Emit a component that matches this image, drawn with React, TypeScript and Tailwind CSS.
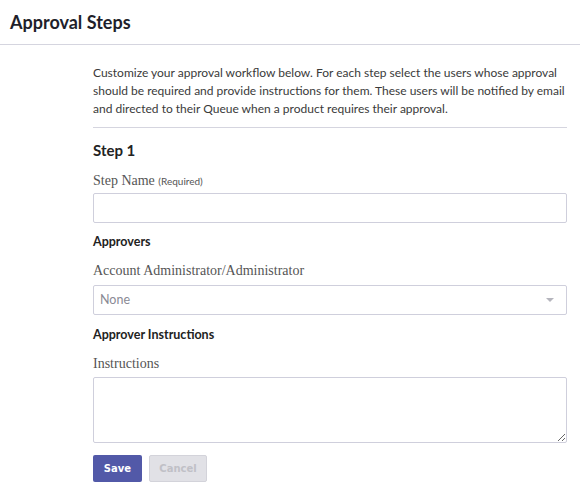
export default function App() {
  const serif = { fontFamily: '"Liberation Serif", serif' };
  return (
    <div className="w-[580px] h-[484px] bg-white overflow-hidden text-[#333]" style={{ fontFamily: 'Lato, "Open Sans", sans-serif' }}>
      <div className="h-[45px] border-b border-[#d5d5df] flex items-center px-[10px]">
        <h1 className="text-[18px] font-bold text-[#1f1f2b]">Approval Steps</h1>
      </div>
      <div className="ml-[93px] w-[474px] pt-[19px]">
        <p className="text-[12px] leading-[18px] text-[#3a3a3a]">
          Customize your approval workflow below. For each step select the users whose approval should be required and provide instructions for them. These users will be notified by email and directed to their Queue when a product requires their approval.
        </p>
        <div className="border-b border-[#d5d5df] mt-[9px]" />
        <h2 className="text-[15px] leading-[20px] font-bold text-[#222] mt-[12px]">Step 1</h2>
        <label className="block mt-[12px] text-[14px] leading-[18px] text-[#555]" style={serif}>
          Step Name <span className="text-[10px]" style={{ fontFamily: 'Lato, sans-serif' }}>(Required)</span>
        </label>
        <input className="block mt-[3px] w-full h-[30px] border border-[#cfcfdc] rounded-[2px]" />
        <div className="mt-[10px] text-[12.5px] leading-[18px] font-bold text-[#222]">Approvers</div>
        <div className="mt-[11px] text-[14px] leading-[18px] text-[#555]" style={serif}>Account Administrator/Administrator</div>
        <div className="mt-[5px] h-[30px] border border-[#cfcfdc] rounded-[2px] flex items-center justify-between px-[6px]">
          <span className="text-[12.5px] text-[#8a8a95]">None</span>
          <span className="w-0 h-0 border-l-[4px] border-r-[4px] border-t-[4px] border-l-transparent border-r-transparent border-t-[#b5b5bd] mr-[6px]" />
        </div>
        <div className="mt-[11px] text-[12.5px] leading-[18px] font-bold text-[#222]">Approver Instructions</div>
        <div className="mt-[11px] text-[14px] leading-[18px] text-[#555]" style={serif}>Instructions</div>
        <textarea className="block mt-[4px] w-full h-[66px] border border-[#cfcfdc] rounded-[2px]" />
        <div className="flex gap-[7px] mt-[12px]">
          <button className="w-[49px] h-[27px] rounded-[2px] bg-[#5259a8] text-white text-[10px] font-bold" style={{ fontFamily: '"DejaVu Sans", sans-serif' }}>Save</button>
          <button className="w-[58px] h-[27px] rounded-[2px] bg-[#e1e1e6] border border-[#d3d3da] text-[#c0c0c6] text-[10px] font-bold" style={{ fontFamily: '"DejaVu Sans", sans-serif' }}>Cancel</button>
        </div>
      </div>
    </div>
  );
}
